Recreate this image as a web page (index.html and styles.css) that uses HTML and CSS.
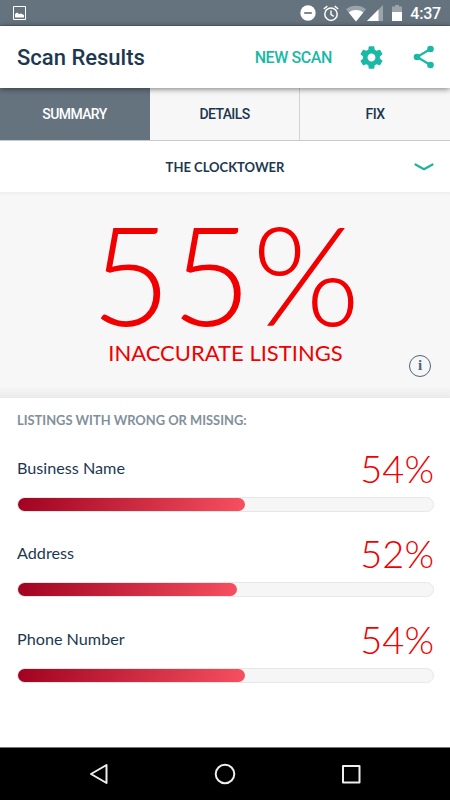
FILE: index.html
```
<!DOCTYPE html>
<html lang="en">
<head>
    <meta charset="UTF-8">
    <meta name="viewport" content="width=device-width, initial-scale=1.0">
    <title>Scan Results</title>
    <link rel="stylesheet" href="styles.css">
</head>
<body>
    <div class="status-bar">
        <svg class="picture" width="13" height="14" viewBox="0 0 13 14">
            <path d="M.5.5h12v13H.5z" fill="none" stroke="#fff"/>
            <path d="M2 11.5V8l2-1.5L6 8l2-.5L11 9v2.5z" fill="#fff"/>
        </svg>
        <div class="status-icons">
            <svg class="dnd" width="16" height="16" viewBox="0 0 16 16">
                <circle cx="8" cy="8" r="7.7" fill="#fff"/>
                <path d="M4.2 8h7.6" stroke="#65737f" stroke-width="1.7"/>
            </svg>
            <svg class="alarm" width="16" height="17" viewBox="0 0 16 17">
                <circle cx="8" cy="9.2" r="6.2" fill="none" stroke="#fff" stroke-width="1.5"/>
                <path d="M8 5.5v4l2.8 1.8M.8 4 4.3 1.1M15.2 4l-3.5-2.9" fill="none" stroke="#fff" stroke-width="1.4"/>
            </svg>
            <svg class="wifi" width="20" height="17" viewBox="0 0 20 17">
                <path d="M0 4.2C5.6-.4 14.4-.4 20 4.2L10 16.5z" fill="#fff" opacity=".35"/>
                <path d="M2.7 7.5C6.8 4.2 13.2 4.2 17.3 7.5L10 16.5z" fill="#fff"/>
            </svg>
            <svg class="signal" width="16" height="16" viewBox="0 0 16 16">
                <path d="M16 0v16H0z" fill="#fff" opacity=".35"/>
                <path d="M11.5 4.5V16H0z" fill="#fff"/>
            </svg>
            <svg class="battery" width="10" height="16" viewBox="0 0 10 16">
                <path d="M3 0h4v1.5h3V7H0V1.5h3z" fill="#fff" opacity=".35"/>
                <path d="M0 7h10v9H0z" fill="#fff"/>
            </svg>
            <span class="time">4:37</span>
        </div>
    </div>

    <div class="header">
        <h1>Scan Results</h1>
        <a class="new-scan">NEW SCAN</a>
        <svg class="gear" width="27" height="27" viewBox="0 0 24 24">
            <path fill="#1ab9a5" d="M19.43 12.98c.04-.32.07-.64.07-.98s-.03-.66-.07-.98l2.11-1.65c.19-.15.24-.42.12-.64l-2-3.46c-.12-.22-.39-.3-.61-.22l-2.49 1c-.52-.4-1.08-.73-1.69-.98l-.38-2.65C14.46 2.18 14.25 2 14 2h-4c-.25 0-.46.18-.49.42l-.38 2.65c-.61.25-1.17.59-1.69.98l-2.49-1c-.23-.09-.49 0-.61.22l-2 3.46c-.13.22-.07.49.12.64l2.11 1.65c-.04.32-.07.65-.07.98s.03.66.07.98l-2.11 1.65c-.19.15-.24.42-.12.64l2 3.46c.12.22.39.3.61.22l2.49-1c.52.4 1.08.73 1.69.98l.38 2.65c.03.24.24.42.49.42h4c.25 0 .46-.18.49-.42l.38-2.65c.61-.25 1.17-.59 1.69-.98l2.49 1c.23.09.49 0 .61-.22l2-3.46c.12-.22.07-.49-.12-.64l-2.11-1.65zM12 15.5c-1.93 0-3.5-1.57-3.5-3.5s1.57-3.5 3.5-3.5 3.5 1.57 3.5 3.5-1.57 3.5-3.5 3.5z"/>
        </svg>
        <svg class="share" width="22" height="24" viewBox="0 0 22 24">
            <path d="M17.5 4 4 12l13.5 8" fill="none" stroke="#1ab9a5" stroke-width="2.2"/>
            <g fill="#1ab9a5">
                <circle cx="17.5" cy="4" r="3.3"/>
                <circle cx="4" cy="12" r="3.3"/>
                <circle cx="17.5" cy="20" r="3.3"/>
            </g>
        </svg>
    </div>

    <div class="tabs">
        <div class="tab active">SUMMARY</div>
        <div class="tab">DETAILS</div>
        <div class="tab">FIX</div>
    </div>

    <div class="location">
        <span>THE CLOCKTOWER</span>
        <svg class="chevron" width="20" height="8" viewBox="0 0 20 8">
            <path d="M1.5 1.5 10 6.2l8.5-4.7" fill="none" stroke="#1fb39b" stroke-width="2.2" stroke-linecap="round" stroke-linejoin="round"/>
        </svg>
    </div>

    <div class="score">
        <div class="score-value">55%</div>
        <div class="score-label">INACCURATE LISTINGS</div>
        <div class="info">i</div>
    </div>

    <div class="listings">
        <h2>LISTINGS WITH WRONG OR MISSING:</h2>
        <div class="item">
            <div class="row"><span class="name">Business Name</span><span class="percent">54%</span></div>
            <div class="bar"><div class="fill" style="width: 54.7%"></div></div>
        </div>
        <div class="item">
            <div class="row"><span class="name">Address</span><span class="percent">52%</span></div>
            <div class="bar"><div class="fill" style="width: 52.8%"></div></div>
        </div>
        <div class="item">
            <div class="row"><span class="name">Phone Number</span><span class="percent">54%</span></div>
            <div class="bar"><div class="fill" style="width: 54.7%"></div></div>
        </div>
    </div>

    <div class="nav-bar">
        <svg width="22" height="22" viewBox="0 0 22 22"><path d="M18.5 2v18L3 11z"/></svg>
        <svg width="22" height="22" viewBox="0 0 22 22"><circle cx="11" cy="11" r="9.3"/></svg>
        <svg width="22" height="22" viewBox="0 0 22 22"><path d="M3 3h16.5v16.5H3z"/></svg>
    </div>
</body>
</html>
```

FILE: styles.css
```
* {
    box-sizing: border-box;
}
body {
    display: flex;
    flex-direction: column;
    height: 800px;
    margin: 0;
    background-color: #fff;
    color: #1c3850;
    font-family: Lato, sans-serif;
    overflow: hidden;
}
svg {
    display: block;
    flex: none;
}
.status-bar {
    display: flex;
    justify-content: space-between;
    height: 26px;
    padding: 6px 9px 0 13px;
    background-color: #65737f;
    border-bottom: 1px solid #56646f;
}
.status-icons {
    display: flex;
    align-items: flex-start;
    margin-top: -1px;
}
.alarm {
    margin-left: 7px;
}
.wifi {
    margin-left: 7px;
}
.signal {
    margin-left: 1px;
}
.battery {
    margin-left: 9px;
}
.time {
    margin-left: 8px;
    color: #fff;
    font: 500 16px/18px Roboto, sans-serif;
    letter-spacing: -0.2px;
}
/* Header */
.header {
    position: relative;
    z-index: 1;
    display: flex;
    align-items: center;
    height: 62px;
    padding: 0 15px 0 17px;
    background-color: #fff;
    box-shadow: 0 1px 6px rgba(0,0,0,0.5);
}
.header h1 {
    margin: 2px auto 0 0;
    font: 500 22px/30px Roboto, sans-serif;
}
.new-scan {
    margin-top: 1px;
    color: #1ab9a5;
    font: 500 16px/20px Roboto, sans-serif;
    letter-spacing: -0.4px;
}
.gear {
    margin-left: 26px;
}
.share {
    margin-left: 28px;
}
/* Tabs */
.tabs {
    display: grid;
    grid-template-columns: 150px 150px 150px;
    height: 53px;
    border-bottom: 1px solid #c7cacd;
}
.tab {
    padding-top: 1px;
    border-right: 1px solid #d2d3d5;
    background-color: #f7f7f7;
    text-align: center;
    font: 500 14px/51px Roboto, sans-serif;
    letter-spacing: -0.6px;
}
.tab:last-child {
    border-right: 0;
}
.tab.active {
    background-color: #65737f;
    border-color: #65737f;
    color: #fff;
}
.location {
    display: grid;
    grid-template-columns: 1fr auto 1fr;
    align-items: center;
    height: 51px;
    padding: 0 16px;
    font-size: 13px;
    font-weight: 700;
}
.location span {
    grid-column: 2;
}
.chevron {
    justify-self: end;
}
/* Score */
.score {
    position: relative;
    height: 206px;
    padding-top: 15px;
    background: linear-gradient(#eeeeee, #f7f7f7 4px, #f7f7f7 194px, #ebebeb);
    color: #f00000;
    text-align: center;
}
.score-value {
    padding-left: 1px;
    font-size: 139px;
    font-weight: 300;
    line-height: 132px;
}
.score-label {
    padding-left: 1px;
    font-size: 22px;
    line-height: 28px;
}
.info {
    position: absolute;
    right: 19px;
    bottom: 21px;
    width: 22px;
    height: 22px;
    border: 1px solid #4c6478;
    border-radius: 50%;
    color: #4c6478;
    font: bold 15px/19px "Liberation Serif", serif;
}
/* Listings */
.listings {
    flex: 1;
    padding: 12px 16px 0 17px;
}
.listings h2 {
    margin: 0 0 17px;
    color: #82909b;
    font-size: 12.9px;
    line-height: 20px;
}
.item {
    height: 85.3px;
}
.row {
    display: flex;
    justify-content: space-between;
    height: 50px;
}
.name {
    font-size: 16.2px;
    line-height: 41px;
}
.percent {
    color: #f00000;
    font-size: 38px;
    font-weight: 300;
    line-height: 43px;
}
.bar {
    height: 15px;
    border: 1px solid #e7e7e7;
    border-radius: 8px;
    background-color: #f6f6f6;
}
.fill {
    height: 13px;
    border-radius: 7px;
    background: linear-gradient(105deg, #a00220, #f65060);
}
.nav-bar {
    display: flex;
    justify-content: space-between;
    height: 53px;
    padding: 15px 88px 0 88px;
    border-top: 1px solid #777;
    background-color: #000;
}
.nav-bar svg {
    fill: none;
    stroke: #eee;
    stroke-width: 2;
    stroke-linejoin: round;
}
```
